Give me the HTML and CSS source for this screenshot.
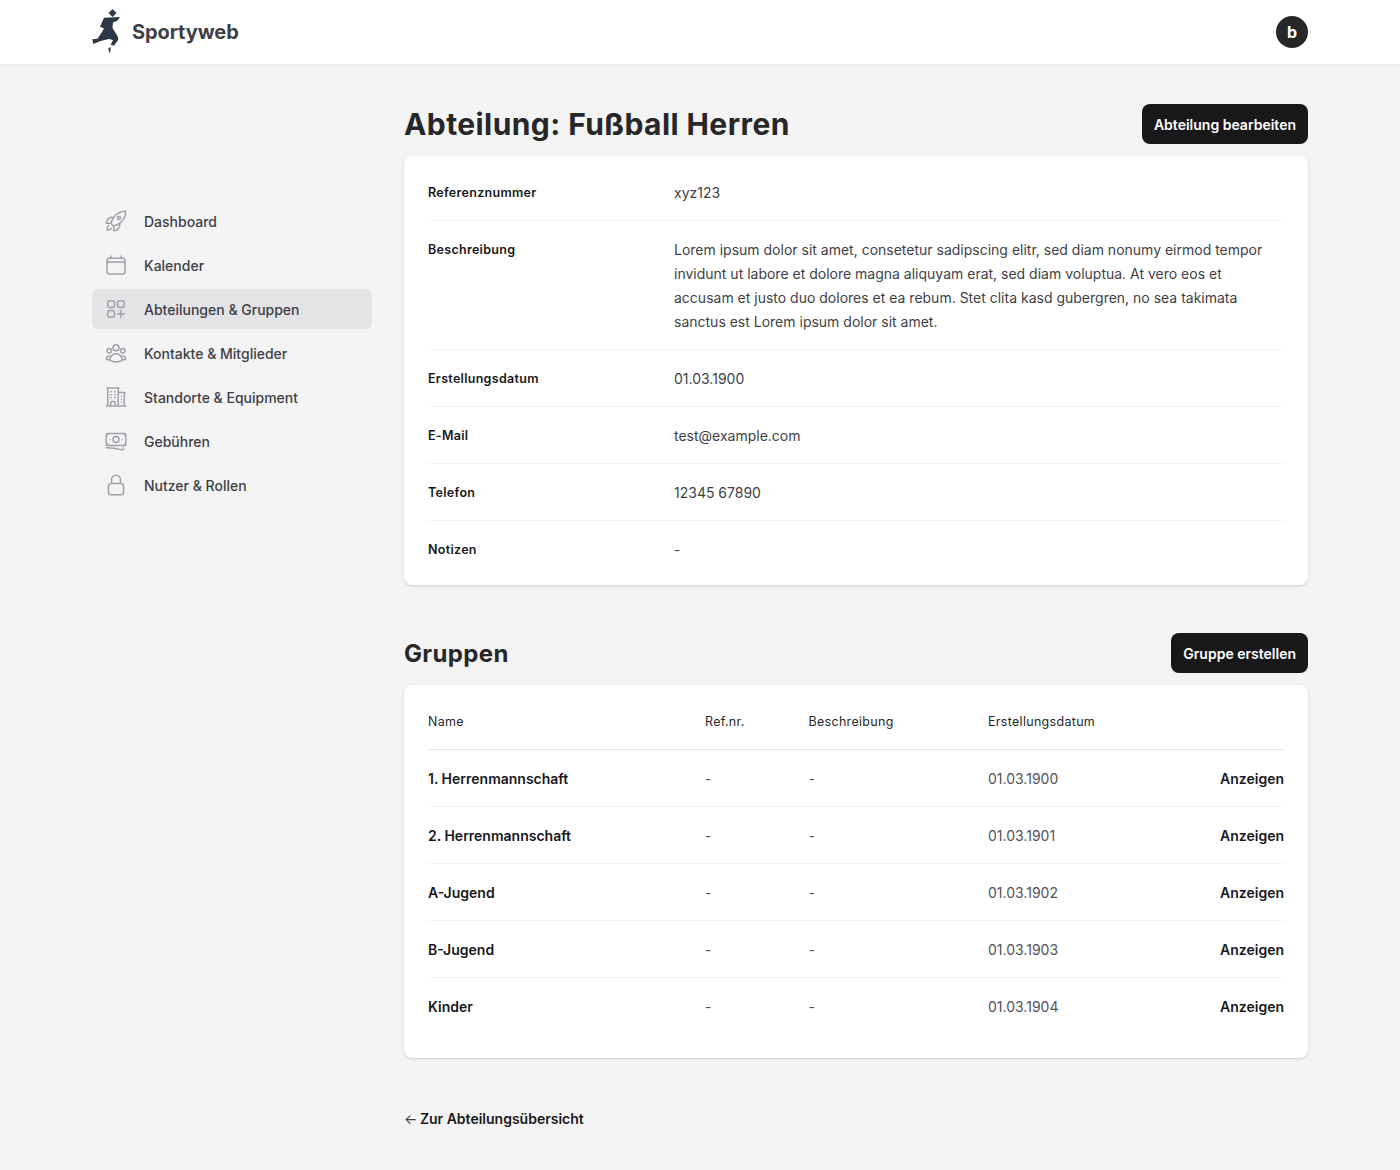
FILE: index.html
```html
<!DOCTYPE html>
<html lang="de">
<head>
    <meta charset="UTF-8">
    <meta name="viewport" content="width=device-width, initial-scale=1.0">
    <title>Sportyweb</title>
    <link rel="stylesheet" href="styles.css">
</head>
<body>

<header class="topbar">
    <a class="brand" href="#">
        <svg class="brand-logo" viewBox="0 0 30 46" width="30" height="46">
            <path d="M20.500 0l4 4-4 4-4-4z"/>
            <path d="M12 8.700L28 8 25.300 11.800 21 13.500 20.500 19 26 28 26 31.300 21.800 36.800 18.700 35.700 21 31 17 30 8.700 32 1.300 35 .3 30.300 5.500 29.700 9.500 23.700 12 19.500 8 17.700z"/>
            <path d="M16 39.700L18.700 38 18 44.700z"/>
        </svg>
        <span class="brand-name">Sportyweb</span>
    </a>
    <div class="avatar">b</div>
</header>

<div class="layout">
    <nav class="sidebar">
        <a class="nav-item" href="#">
            <svg class="nav-icon" viewBox="0 0 24 24"><path d="M15.590 14.370a6 6 0 0 1-5.840 7.380v-4.800m5.840-2.580a14.980 14.980 0 0 0 6.160-12.120A14.980 14.980 0 0 0 9.631 8.410m5.960 5.960a14.930 14.930 0 0 1-5.841 2.580m-.119-8.540a6 6 0 0 0-7.381 5.840h4.800m2.581-5.840a14.930 14.930 0 0 0-2.580 5.840m2.699 2.700c-.103.021-.207.041-.311.060a15.090 15.090 0 0 1-2.448-2.448 14.900 14.900 0 0 1 .06-.312m-2.240 2.390a4.490 4.490 0 0 0-1.757 4.306 4.490 4.490 0 0 0 4.306-1.758M16.500 9a1.500 1.500 0 1 1-3 0 1.500 1.500 0 0 1 3 0z"/></svg>
            <span class="nav-label">Dashboard</span>
        </a>
        <a class="nav-item" href="#">
            <svg class="nav-icon" viewBox="0 0 24 24"><path d="M6.750 3v2.250M17.250 3v2.250M3 18.750V7.500a2.250 2.250 0 0 1 2.250-2.250h13.500A2.250 2.250 0 0 1 21 7.500v11.250m-18 0A2.250 2.250 0 0 0 5.250 21h13.500A2.250 2.250 0 0 0 21 18.750m-18 0v-7.500A2.250 2.250 0 0 1 5.250 9h13.500A2.250 2.250 0 0 1 21 11.250v7.500"/></svg>
            <span class="nav-label">Kalender</span>
        </a>
        <a class="nav-item active" href="#">
            <svg class="nav-icon" viewBox="0 0 24 24"><path d="M13.500 16.875h3.375m0 0h3.375m-3.375 0V13.500m0 6.750V16.875M6 10.500h2.250a2.250 2.250 0 0 0 2.250-2.250V6a2.250 2.250 0 0 0-2.250-2.250H6A2.250 2.250 0 0 0 3.750 6v2.250A2.250 2.250 0 0 0 6 10.500zm0 9.750h2.250A2.250 2.250 0 0 0 10.500 18v-2.250a2.250 2.250 0 0 0-2.250-2.250H6a2.250 2.250 0 0 0-2.250 2.250V18A2.250 2.250 0 0 0 6 20.250zm9.750-9.750H18a2.250 2.250 0 0 0 2.250-2.250V6A2.250 2.250 0 0 0 18 3.750h-2.250A2.250 2.250 0 0 0 13.500 6v2.250a2.250 2.250 0 0 0 2.250 2.250z"/></svg>
            <span class="nav-label">Abteilungen &amp; Gruppen</span>
        </a>
        <a class="nav-item" href="#">
            <svg class="nav-icon" viewBox="0 0 24 24"><path d="M18 18.720a9.090 9.090 0 0 0 3.741-.479 3 3 0 0 0-4.682-2.720m.94 3.198l.1.031c0 .225-.012.447-.037.666A11.940 11.940 0 0 1 12 21c-2.170 0-4.207-.576-5.963-1.584A6.060 6.060 0 0 1 6 18.719m12 0a5.970 5.970 0 0 0-.941-3.197m0 0A5.990 5.990 0 0 0 12 12.750a5.990 5.990 0 0 0-5.058 2.772m0 0a3 3 0 0 0-4.681 2.720 8.990 8.990 0 0 0 3.740.477m.940-3.197a5.970 5.970 0 0 0-.940 3.197M15 6.750a3 3 0 1 1-6 0 3 3 0 0 1 6 0zm6 3a2.250 2.250 0 1 1-4.500 0 2.250 2.250 0 0 1 4.500 0zm-13.500 0a2.250 2.250 0 1 1-4.500 0 2.250 2.250 0 0 1 4.500 0z"/></svg>
            <span class="nav-label">Kontakte &amp; Mitglieder</span>
        </a>
        <a class="nav-item" href="#">
            <svg class="nav-icon" viewBox="0 0 24 24"><path d="M2.250 21h19.500m-18-18v18m10.500-18v18m6-13.500V21M6.750 6.750h.750m-.750 3h.750m-.750 3h.750m3-6h.750m-.750 3h.750m-.750 3h.750M6.750 21v-3.375c0-.621.504-1.125 1.125-1.125h2.250c.621 0 1.125.504 1.125 1.125V21M3 3h12m-.750 4.500H21m-3.750 3.750h.008v.008h-.008v-.008zm0 3h.008v.008h-.008v-.008zm0 3h.008v.008h-.008v-.008z"/></svg>
            <span class="nav-label">Standorte &amp; Equipment</span>
        </a>
        <a class="nav-item" href="#">
            <svg class="nav-icon" viewBox="0 0 24 24"><path d="M2.250 18.750a60.070 60.070 0 0 1 15.797 2.101c.727.198 1.453-.342 1.453-1.096V18.750M3.750 4.500v.750A.750.750 0 0 1 3 6h-.750m0 0v-.375c0-.621.504-1.125 1.125-1.125H20.250M2.250 6v9m18-10.500v.750c0 .414.336.750.750.750h.750m-1.500-1.500h.375c.621 0 1.125.504 1.125 1.125v9.750c0 .621-.504 1.125-1.125 1.125h-.375m1.500-1.500H21a.750.750 0 0 0-.750.750v.750m0 0H3.750m0 0h-.375a1.125 1.125 0 0 1-1.125-1.125V15m1.500 1.500v-.750A.750.750 0 0 0 3 15h-.750M15 10.500a3 3 0 1 1-6 0 3 3 0 0 1 6 0zm3 0h.008v.008H18V10.500zm-12 0h.008v.008H6V10.500z"/></svg>
            <span class="nav-label">Gebühren</span>
        </a>
        <a class="nav-item" href="#">
            <svg class="nav-icon" viewBox="0 0 24 24"><path d="M16.500 10.500V6.750a4.500 4.500 0 1 0-9 0v3.750m-.750 11.250h10.500a2.250 2.250 0 0 0 2.250-2.250v-6.750a2.250 2.250 0 0 0-2.250-2.250H6.750a2.250 2.250 0 0 0-2.250 2.250v6.750a2.250 2.250 0 0 0 2.250 2.250z"/></svg>
            <span class="nav-label">Nutzer &amp; Rollen</span>
        </a>
    </nav>

    <main class="content">
        <div class="section-head">
            <h1 class="title">Abteilung: Fußball Herren</h1>
            <a class="btn" href="#">Abteilung bearbeiten</a>
        </div>
        <section class="card">
            <dl class="details">
                <div class="detail-row">
                    <dt>Referenznummer</dt>
                    <dd>xyz123</dd>
                </div>
                <div class="detail-row">
                    <dt>Beschreibung</dt>
                    <dd>Lorem ipsum dolor sit amet, consetetur sadipscing elitr, sed diam nonumy eirmod tempor invidunt ut labore et dolore magna aliquyam erat, sed diam voluptua. At vero eos et accusam et justo duo dolores et ea rebum. Stet clita kasd gubergren, no sea takimata sanctus est Lorem ipsum dolor sit amet.</dd>
                </div>
                <div class="detail-row">
                    <dt>Erstellungsdatum</dt>
                    <dd>01.03.1900</dd>
                </div>
                <div class="detail-row">
                    <dt>E-Mail</dt>
                    <dd>test@example.com</dd>
                </div>
                <div class="detail-row">
                    <dt>Telefon</dt>
                    <dd>12345 67890</dd>
                </div>
                <div class="detail-row">
                    <dt>Notizen</dt>
                    <dd>-</dd>
                </div>
            </dl>
        </section>

        <div class="section-head section-head-groups">
            <h2 class="subtitle">Gruppen</h2>
            <a class="btn" href="#">Gruppe erstellen</a>
        </div>
        <section class="card card-table">
            <table class="groups">
                <thead>
                    <tr>
                        <th class="col-name">Name</th>
                        <th class="col-ref">Ref.nr.</th>
                        <th class="col-desc">Beschreibung</th>
                        <th class="col-date">Erstellungsdatum</th>
                        <th></th>
                    </tr>
                </thead>
                <tbody>
                    <tr>
                        <td class="cell-name">1. Herrenmannschaft</td>
                        <td>-</td>
                        <td>-</td>
                        <td>01.03.1900</td>
                        <td class="cell-action"><a href="#">Anzeigen</a></td>
                    </tr>
                    <tr>
                        <td class="cell-name">2. Herrenmannschaft</td>
                        <td>-</td>
                        <td>-</td>
                        <td>01.03.1901</td>
                        <td class="cell-action"><a href="#">Anzeigen</a></td>
                    </tr>
                    <tr>
                        <td class="cell-name">A-Jugend</td>
                        <td>-</td>
                        <td>-</td>
                        <td>01.03.1902</td>
                        <td class="cell-action"><a href="#">Anzeigen</a></td>
                    </tr>
                    <tr>
                        <td class="cell-name">B-Jugend</td>
                        <td>-</td>
                        <td>-</td>
                        <td>01.03.1903</td>
                        <td class="cell-action"><a href="#">Anzeigen</a></td>
                    </tr>
                    <tr>
                        <td class="cell-name">Kinder</td>
                        <td>-</td>
                        <td>-</td>
                        <td>01.03.1904</td>
                        <td class="cell-action"><a href="#">Anzeigen</a></td>
                    </tr>
                </tbody>
            </table>
        </section>

        <a class="back-link" href="#"><span class="back-arrow">&larr;</span> Zur Abteilungsübersicht</a>
    </main>
</div>

</body>
</html>
```
FILE: styles.css
```css
* {
    box-sizing: border-box;
}
body {
    margin: 0;
    background: #f4f4f4;
    color: #18181b;
    font-family: Inter, "Liberation Sans", sans-serif;
    font-size: 14px;
    line-height: 20px;
}
a {
    color: inherit;
    text-decoration: none;
}

.topbar {
    display: flex;
    align-items: center;
    justify-content: space-between;
    height: 65px;
    padding: 0 92px;
    background: white;
    border-bottom: 1px solid #eeeeee;
    box-shadow: 0 1px 2px rgba(0, 0, 0, 0.05);
}
.brand {
    display: flex;
    align-items: center;
    gap: 10px;
}
.brand-logo {
    display: block;
    fill: #2d3748;
}
.brand-name {
    color: #3f3f46;
    font-size: 20px;
    font-weight: 700;
    line-height: 28px;
    letter-spacing: -0.1px;
}
.avatar {
    display: flex;
    align-items: center;
    justify-content: center;
    width: 32px;
    height: 32px;
    border-radius: 50%;
    background: #27272a;
    color: white;
    font-size: 16px;
    font-weight: 700;
}

.layout {
    display: flex;
    gap: 32px;
    padding: 0 92px;
}
.sidebar {
    display: flex;
    flex-direction: column;
    gap: 4px;
    flex: 0 0 280px;
    padding-top: 136px;
}
.nav-item {
    display: flex;
    align-items: center;
    gap: 16px;
    height: 40px;
    padding: 0 12px;
    border-radius: 6px;
    color: #3f3f46;
    font-weight: 500;
}
.nav-label {
    padding-top: 2px;
}
.nav-item.active {
    background: #e4e4e7;
}
.nav-icon {
    flex: none;
    width: 24px;
    height: 24px;
    fill: none;
    stroke: #a1a1aa;
    stroke-width: 1.5;
    stroke-linecap: round;
    stroke-linejoin: round;
}

.content {
    flex: 1;
    min-width: 0;
    padding-top: 39px;
}
.section-head {
    display: flex;
    align-items: center;
    justify-content: space-between;
    height: 40px;
    margin-bottom: 12px;
}
.section-head-groups {
    margin-top: 48px;
}
.title {
    margin: 0;
    font-size: 30px;
    font-weight: 700;
    line-height: 40px;
    letter-spacing: 0.42px;
    color: #27272a;
}
.subtitle {
    margin: 0;
    padding-top: 2px;
    font-size: 24px;
    font-weight: 700;
    line-height: 32px;
    letter-spacing: 0.35px;
    color: #27272a;
}
.btn {
    display: block;
    padding: 11px 12px 9px;
    border-radius: 8px;
    background: #18181b;
    color: white;
    font-weight: 600;
}

.card {
    padding: 8px 24px;
    border-radius: 8px;
    background: white;
    box-shadow: 0 1px 3px rgba(0, 0, 0, 0.1), 0 1px 2px rgba(0, 0, 0, 0.06);
}
.card-table {
    padding-bottom: 24px;
}

.details {
    margin: 0;
}
.detail-row {
    display: flex;
    padding: 16px 0;
    border-top: 1px solid #f4f4f5;
}
.detail-row:first-child {
    border-top: 0;
}
.detail-row dt {
    flex: 0 0 246px;
    height: 24px;
    font-size: 12.500px;
    font-weight: 600;
    line-height: 25px;
    letter-spacing: 0.3px;
}
.detail-row dd {
    flex: 1;
    margin: 0 0 -1px;
    padding-top: 1px;
    color: #3f3f46;
    line-height: 24px;
}

.groups {
    width: 100%;
    border-collapse: collapse;
}
.groups th {
    height: 56px;
    padding: 2px 0 0;
    border-bottom: 1px solid #e4e4e7;
    color: #27272a;
    font-size: 12.500px;
    font-weight: 400;
    letter-spacing: 0.3px;
    text-align: left;
}
.col-name {
    width: 277px;
}
.col-ref {
    width: 103.500px;
}
.col-desc {
    width: 179.500px;
}
.groups td {
    height: 57px;
    padding: 2px 0 0;
    border-top: 1px solid #f4f4f5;
    color: #52525b;
}
.groups tbody tr:first-child td {
    border-top: 0;
}
.groups .cell-name {
    color: #18181b;
    font-weight: 600;
}
.groups .cell-action {
    color: #18181b;
    font-weight: 600;
    text-align: right;
}

.back-link {
    display: block;
    margin-top: 51px;
    font-weight: 600;
}
.back-arrow {
    margin-right: -1px;
    color: #3f3f46;
    font-weight: 400;
}
```
